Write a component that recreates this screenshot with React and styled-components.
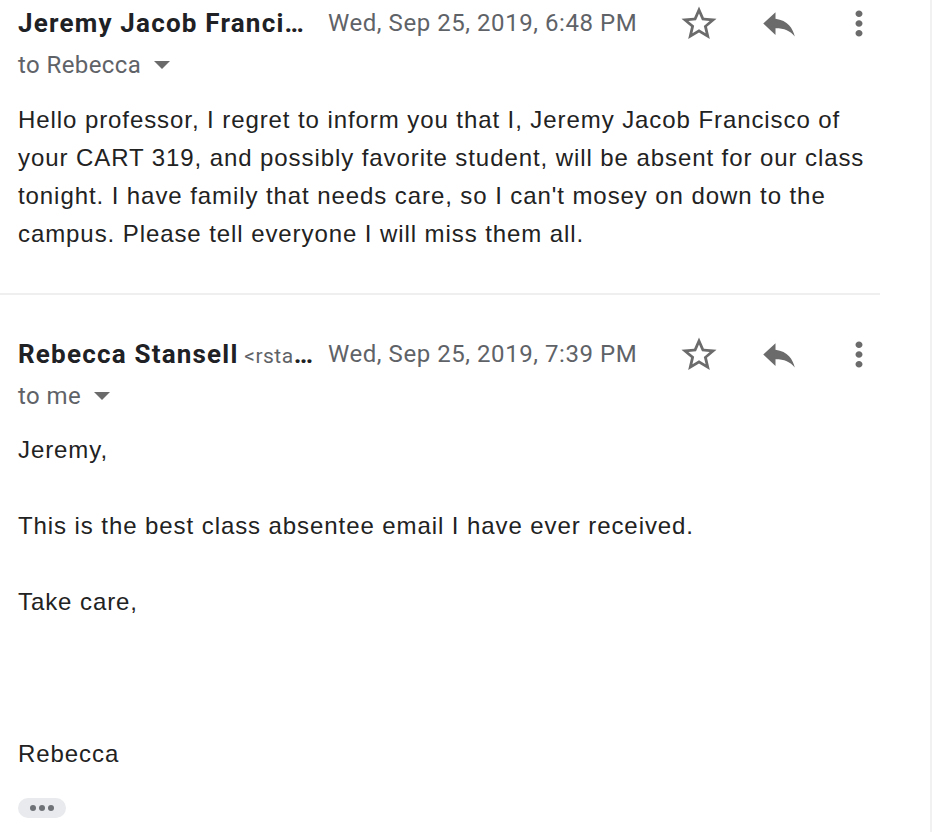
import React from 'react';
import styled, {createGlobalStyle} from 'styled-components';

const GlobalStyle = createGlobalStyle`
body {
    margin: 0;
    background: #ffffff;
}
`;

const Page = styled.div`
width: 932px;
min-height: 832px;
border-right: 2px solid #f1f1f1;
box-sizing: border-box;
`;

const Thread = styled.div`
width: 880px;
`;

const Message = styled.div`
padding: ${props => props.first ? "1px 0 40px" : "37px 0 0"};
border-bottom: ${props => props.first ? "2px solid #efefef" : "none"};
`;

const Header = styled.div`
display: flex;
align-items: center;
height: 44px;
padding-left: 18px;
`;

const Sender = styled.div`
width: 300px;
flex-shrink: 0;
white-space: nowrap;
overflow: hidden;
text-overflow: ellipsis;
font-family: Roboto, "Liberation Sans", sans-serif;
font-weight: 700;
font-size: 26px;
letter-spacing: 1.2px;
color: #202124;
`;

const Address = styled.span`
font-weight: 400;
font-size: 21px;
letter-spacing: 0.5px;
color: #5f6368;
`;

const Date = styled.div`
margin-left: 10px;
white-space: nowrap;
font-family: Roboto, "Liberation Sans", sans-serif;
font-size: 24px;
letter-spacing: 0.55px;
color: #5f6368;
`;

const Actions = styled.div`
margin-left: auto;
display: flex;
align-items: center;
gap: 38px;
`;

const IconButton = styled.span`
display: flex;
align-items: center;
justify-content: center;
width: 42px;
height: 42px;
color: #6b6b6b;
`;

const Recipient = styled.div`
display: flex;
align-items: center;
height: 40px;
padding-left: 18px;
font-family: Roboto, "Liberation Sans", sans-serif;
font-size: 24px;
letter-spacing: 0.4px;
color: #5f6368;
`;

const Caret = styled.span`
margin-left: 13px;
width: 0;
height: 0;
border-left: 8px solid transparent;
border-right: 8px solid transparent;
border-top: 8px solid #6b6b6b;
`;

const Body = styled.div`
margin-top: ${props => props.gap}px;
padding-left: 18px;
font-family: "Liberation Sans", Arial, sans-serif;
font-size: 24px;
letter-spacing: 0.92px;
line-height: 38px;
color: #222222;
`;

const Line = styled.div`
min-height: 38px;
white-space: nowrap;
`;

const MoreButton = styled.div`
margin: 25px 0 0 18px;
width: 48px;
height: 20px;
border-radius: 10px;
background: #e8eaed;
display: flex;
align-items: center;
justify-content: center;
gap: 3px;
`;

const Dot = styled.span`
width: 6px;
height: 6px;
border-radius: 50%;
background: #6f7377;
`;

const StarIcon = () => (
    <svg viewBox="0 0 24 24" width="44" height="41" fill="currentColor" preserveAspectRatio="none">
        <path d="M22 9.24l-7.19-.62L12 2 9.19 8.63 2 9.24l5.46 4.73L5.820 21 12 17.27 18.18 21l-1.63-7.03L22 9.24zM12 15.4l-3.76 2.27 1-4.28-3.32-2.88 4.38-.38L12 6.1l1.71 4.04 4.38.38-3.32 2.88 1 4.28L12 15.4z" />
    </svg>
);

const ReplyIcon = () => (
    <svg viewBox="0 0 24 24" width="43" height="39" fill="currentColor" preserveAspectRatio="none">
        <path d="M10 9V5l-7 7 7 7v-4.1c5 0 8.5 1.6 11 5.1-1-5-4-10-11-11z" />
    </svg>
);

const MoreIcon = () => (
    <svg viewBox="0 0 24 24" width="42" height="39" fill="currentColor" preserveAspectRatio="none">
        <path d="M12 8c1.1 0 2-.9 2-2s-.9-2-2-2-2 .9-2 2 .9 2 2 2zm0 2c-1.1 0-2 .9-2 2s.9 2 2 2 2-.9 2-2-.9-2-2-2zm0 6c-1.1 0-2 .9-2 2s.9 2 2 2 2-.9 2-2-.9-2-2-2z" />
    </svg>
);

const MessageHeader = ({sender, address, date, to}) => (
    <>
        <Header>
            <Sender>
                {sender}
                {address && <Address> {address}</Address>}
            </Sender>
            <Date>{date}</Date>
            <Actions>
                <IconButton><StarIcon /></IconButton>
                <IconButton><ReplyIcon /></IconButton>
                <IconButton><MoreIcon /></IconButton>
            </Actions>
        </Header>
        <Recipient>
            {to}
            <Caret />
        </Recipient>
    </>
);

const firstBody = [
    "Hello professor, I regret to inform you that I, Jeremy Jacob Francisco of",
    "your CART 319, and possibly favorite student, will be absent for our class",
    "tonight. I have family that needs care, so I can't mosey on down to the",
    "campus. Please tell everyone I will miss them all.",
];

const replyBody = [
    "Jeremy,",
    "",
    "This is the best class absentee email I have ever received.",
    "",
    "Take care,",
    "",
    "",
    "",
    "Rebecca",
];

export default function App() {
    return (
        <Page>
            <GlobalStyle />
            <Thread>
                <Message first>
                    <MessageHeader
                        sender="Jeremy Jacob Francisco"
                        address="<jeremy.francisco@gmail.com>"
                        date="Wed, Sep 25, 2019, 6:48 PM"
                        to="to Rebecca"
                    />
                    <Body gap={16}>
                        {firstBody.map((text, i) => <Line key={i}>{text}</Line>)}
                    </Body>
                </Message>
                <Message>
                    <MessageHeader
                        sender="Rebecca Stansell"
                        address="<rstansell@concordia.ca>"
                        date="Wed, Sep 25, 2019, 7:39 PM"
                        to="to me"
                    />
                    <Body gap={15}>
                        {replyBody.map((text, i) => <Line key={i}>{text}</Line>)}
                    </Body>
                    <MoreButton>
                        <Dot />
                        <Dot />
                        <Dot />
                    </MoreButton>
                </Message>
            </Thread>
        </Page>
    );
}
